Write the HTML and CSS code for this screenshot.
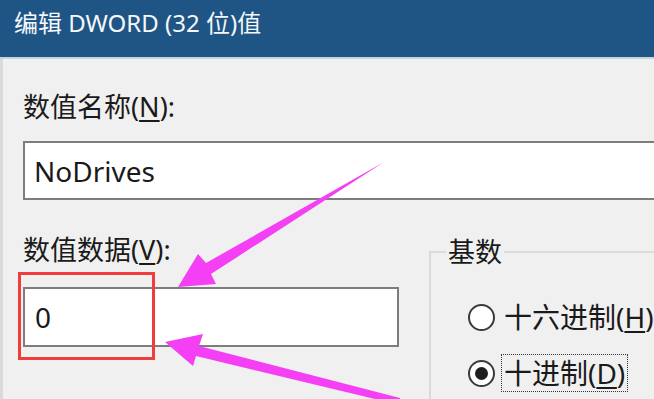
FILE: index.html
```html
<!DOCTYPE html>
<html lang="zh-CN">
<head>
<meta charset="utf-8">
<title>编辑 DWORD (32 位)值</title>
<link rel="stylesheet" href="styles.css">
</head>
<body>
<div class="window">
  <div class="titlebar">编辑 DWORD (32 位)值</div>
  <div class="titleline"></div>
  <div class="content">
    <div class="label label-name">数值名称(<u>N</u>):</div>
    <div class="textbox textbox-name">NoDrives</div>
    <div class="lower">
      <div class="left-col">
        <div class="label label-data">数值数据(<u>V</u>):</div>
        <div class="textbox textbox-data">0</div>
      </div>
      <fieldset class="base">
        <legend class="base-title">基数</legend>
        <div class="radio-row first">
          <span class="radio"></span>
          <span class="radio-text">十六进制(<u>H</u>)</span>
        </div>
        <div class="radio-row">
          <span class="radio checked"></span>
          <span class="radio-text focus">十进制(<u>D</u>)</span>
        </div>
      </fieldset>
    </div>
  </div>
  <div class="highlight"></div>
  <svg class="arrows" width="654" height="399" viewBox="0 0 654 399">
    <polygon points="384,162 206,263 198,254 178,287 216,284 211,274" fill="#f43ff4"/>
    <polygon points="165,342 203,334 199,346 400,398 400,405 196,356 193,366" fill="#f43ff4"/>
  </svg>
</div>
</body>
</html>
```
FILE: styles.css
```css
html, body {
  margin: 0;
  padding: 0;
  background: #f0f0f0;
}
.window {
  position: relative;
  width: 654px;
  height: 399px;
  overflow: hidden;
  background: #f0f0f0;
  font-family: "Noto Sans", "Noto Sans CJK SC", sans-serif;
  color: #1a1a1a;
  box-shadow: inset 3px 0 0 #dadada;
}
.titlebar {
  height: 57px;
  box-sizing: border-box;
  background: #1f5584;
  color: #f4f7fb;
  font-size: 24px;
  line-height: 30px;
  padding: 8px 0 0 14px;
  white-space: nowrap;
}
.titleline {
  height: 2px;
  background: #c4d4e4;
}
.content {
  padding-left: 23px;
}
.label {
  font-size: 27px;
  line-height: 32px;
  white-space: nowrap;
}
.label u {
  text-underline-offset: 3px;
}
.label-name {
  margin-top: 32px;
}
.textbox {
  box-sizing: border-box;
  background: #fff;
  border: 2px solid #7d7d7d;
  font-size: 28px;
  display: flex;
  align-items: center;
  padding-left: 9px;
  color: #1a1a1a;
}
.textbox-name {
  margin-top: 18px;
  width: 660px;
  height: 59px;
}
.lower {
  display: flex;
  align-items: flex-start;
}
.left-col {
  width: 376px;
  flex: none;
}
.label-data {
  margin-top: 34px;
}
.textbox-data {
  margin-top: 21px;
  height: 60px;
  width: 376px;
  padding-left: 10px;
}
.base {
  margin: 37px 0 0 30px;
  padding: 0;
  border: 2px solid #dadada;
  width: 300px;
  height: 200px;
  flex: none;
}
.base-title {
  font-size: 27px;
  line-height: 30px;
  padding: 0 2px;
  margin-left: 15px;
  color: #1a1a1a;
}
.radio-row {
  display: flex;
  align-items: center;
  height: 56px;
  margin-left: 37px;
  white-space: nowrap;
}
.radio-row.first {
  margin-top: 22px;
}
.radio {
  width: 27px;
  height: 27px;
  box-sizing: border-box;
  border: 2px solid #3a3a3a;
  border-radius: 50%;
  background: #fff;
  flex: none;
  display: flex;
  align-items: center;
  justify-content: center;
}
.radio.checked::after {
  content: "";
  width: 13px;
  height: 13px;
  border-radius: 50%;
  background: #1e1e1e;
}
.radio-text {
  margin-left: 7px;
  font-size: 28px;
  line-height: 36px;
  padding: 0 2px;
}
.radio-text u {
  text-underline-offset: 3px;
}
.focus {
  outline: 1px dotted #333;
  outline-offset: 0;
}
.highlight {
  position: absolute;
  left: 18px;
  top: 272px;
  width: 131px;
  height: 82px;
  border: 3px solid #f23b3b;
}
.arrows {
  position: absolute;
  left: 0;
  top: 0;
}
```
